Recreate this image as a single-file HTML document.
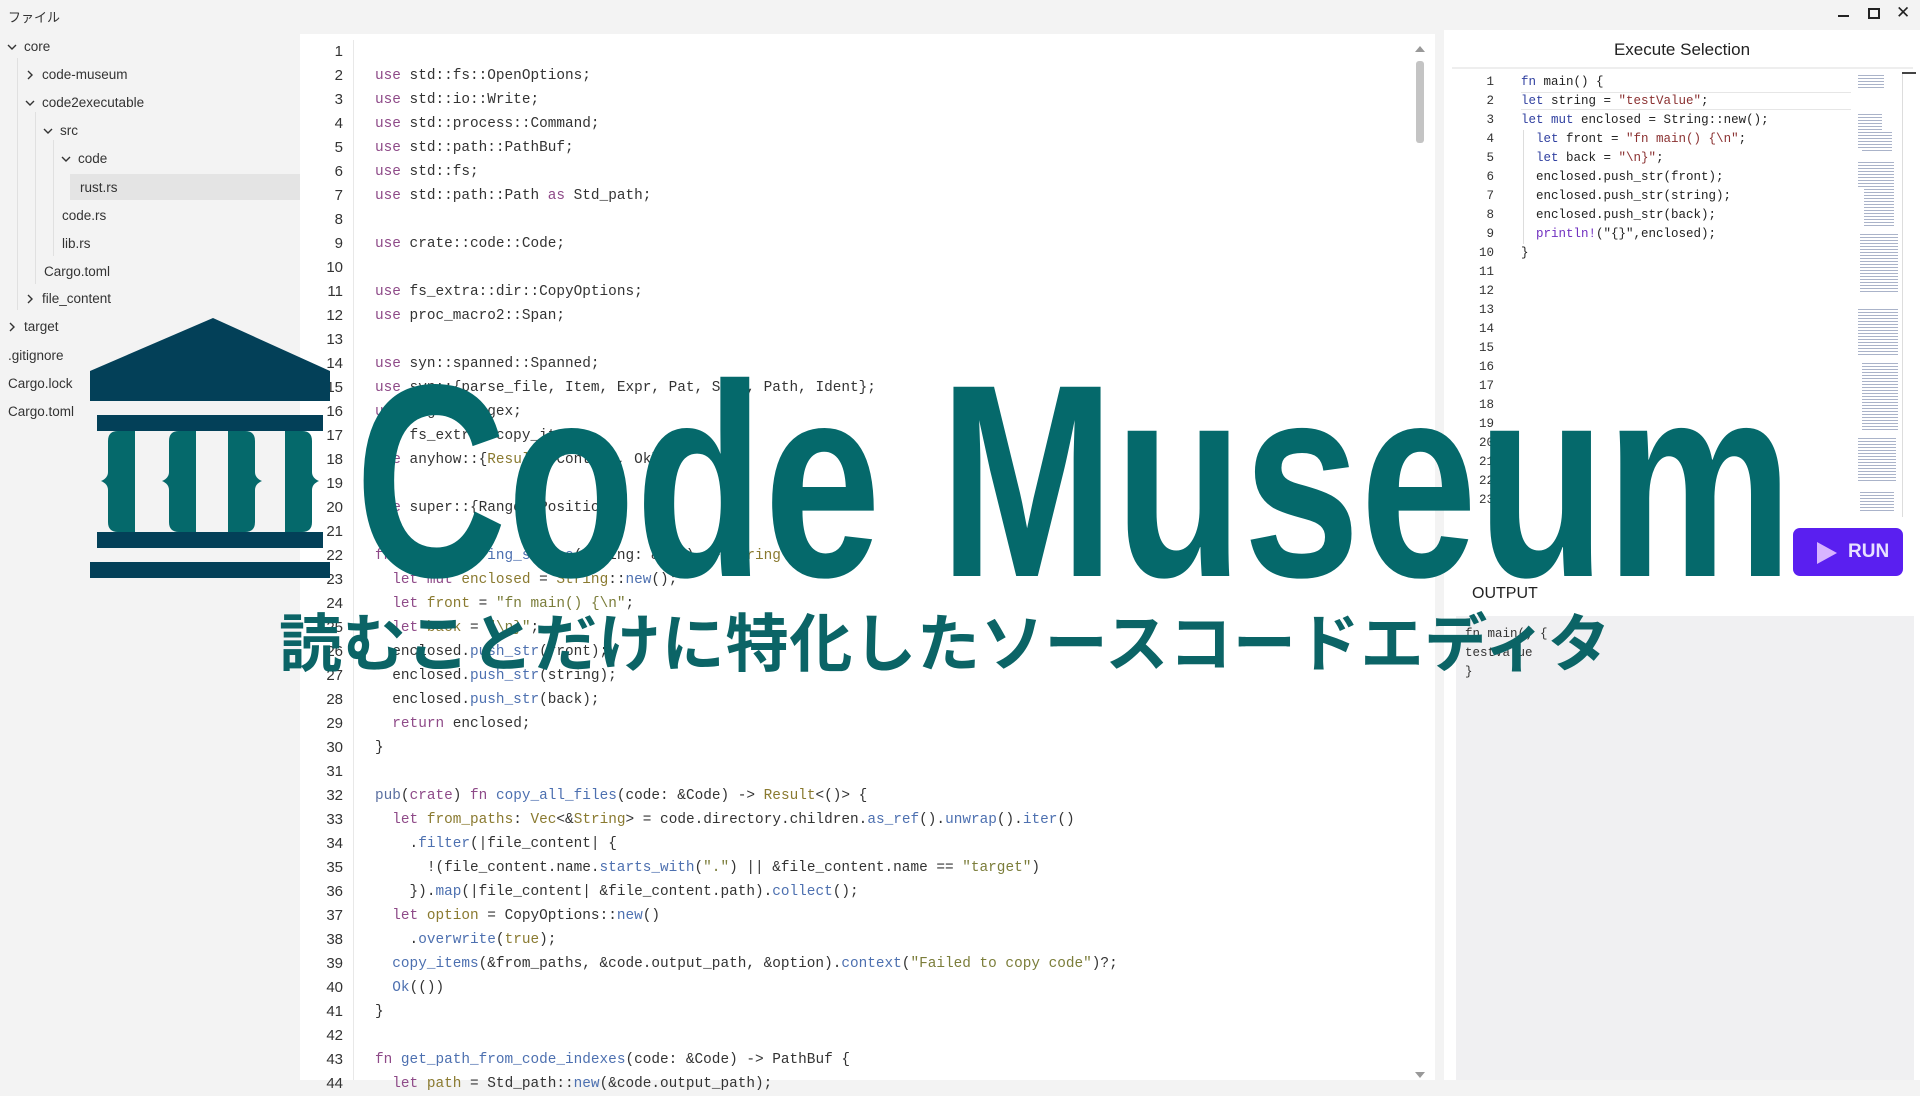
<!DOCTYPE html>
<html><head><meta charset="utf-8">
<style>
*{margin:0;padding:0;box-sizing:border-box}
body{width:1920px;height:1080px;overflow:hidden;background:#f3f3f3;position:relative;font-family:"Liberation Sans","Noto Sans CJK JP",sans-serif;color:#333}
.abs{position:absolute}
.tree div{position:absolute;font-size:13.5px;color:#333;white-space:nowrap;line-height:16px}
.tree svg{position:absolute;left:-17px;top:3px}
#ed{position:absolute;left:300px;top:34px;width:1135px;height:1046px;background:#fff}
.ln{position:absolute;left:300px;width:43px;text-align:right;font-family:"Liberation Sans",sans-serif;font-size:15px;color:#333;line-height:24px}
.code{position:absolute;left:375px;font-family:"Liberation Mono",monospace;font-size:14.4px;color:#333;line-height:24px;white-space:pre}
.k{color:#8e4a88}.b{color:#4d70b0}.o{color:#8a7a30}.s{color:#7b7d3a}.p{color:#5a6fa0}
#rp{position:absolute;left:1444px;top:30px;width:476px;height:1050px;background:#fff}
.rln{position:absolute;left:1460px;width:34px;text-align:right;font-family:"Liberation Mono",monospace;font-size:12.5px;color:#333;line-height:19px}
.rcode{position:absolute;left:1521px;font-family:"Liberation Mono",monospace;font-size:12.5px;color:#222;line-height:19px;white-space:pre}
.rcode .k{color:#3040a0}.rcode .s{color:#8a3030}.rcode .m{color:#7030c0}
</style></head><body>
<div class="abs" style="left:8px;top:7px;font-size:13px;color:#333">ファイル</div>
<div class="abs" style="left:1838px;top:15px;width:11px;height:2px;background:#222"></div>
<div class="abs" style="left:1868px;top:8px;width:12px;height:11px;border:2px solid #222"></div>
<div class="abs" style="left:1896px;top:3px;font-size:17px;color:#222">✕</div>

<div class="abs" style="left:70px;top:174px;width:230px;height:26px;background:#e4e4e4"></div>
<div class="abs" style="left:17px;top:58px;width:1px;height:252px;background:#e0e0e0"></div>
<div class="abs" style="left:35px;top:112px;width:1px;height:172px;background:#e0e0e0"></div>
<div class="abs" style="left:53px;top:140px;width:1px;height:116px;background:#e0e0e0"></div>
<div class="tree">
<div style="left:24px;top:39px"><svg width="10" height="10"><polyline points="1,3 5,7 9,3" fill="none" stroke="#333" stroke-width="1.4"/></svg>core</div>
<div style="left:42px;top:67px"><svg width="10" height="10"><polyline points="3,1 7,5 3,9" fill="none" stroke="#333" stroke-width="1.4"/></svg>code-museum</div>
<div style="left:42px;top:95px"><svg width="10" height="10"><polyline points="1,3 5,7 9,3" fill="none" stroke="#333" stroke-width="1.4"/></svg>code2executable</div>
<div style="left:60px;top:123px"><svg width="10" height="10"><polyline points="1,3 5,7 9,3" fill="none" stroke="#333" stroke-width="1.4"/></svg>src</div>
<div style="left:78px;top:151px"><svg width="10" height="10"><polyline points="1,3 5,7 9,3" fill="none" stroke="#333" stroke-width="1.4"/></svg>code</div>
<div style="left:80px;top:180px">rust.rs</div>
<div style="left:62px;top:208px">code.rs</div>
<div style="left:62px;top:236px">lib.rs</div>
<div style="left:44px;top:264px">Cargo.toml</div>
<div style="left:42px;top:291px"><svg width="10" height="10"><polyline points="3,1 7,5 3,9" fill="none" stroke="#333" stroke-width="1.4"/></svg>file_content</div>
<div style="left:24px;top:319px"><svg width="10" height="10"><polyline points="3,1 7,5 3,9" fill="none" stroke="#333" stroke-width="1.4"/></svg>target</div>
<div style="left:8px;top:348px">.gitignore</div>
<div style="left:8px;top:376px">Cargo.lock</div>
<div style="left:8px;top:404px">Cargo.toml</div>
</div>

<div id="ed"></div>
<div class="abs" style="left:353px;top:40px;width:1px;height:1040px;background:#e8e8e8"></div>
<div class="abs" style="left:1416px;top:61px;width:8px;height:82px;background:#c4c4c4;border-radius:3px"></div>
<div class="abs" style="left:1415px;top:46px;width:0;height:0;border-left:5px solid transparent;border-right:5px solid transparent;border-bottom:6px solid #999"></div>
<div class="abs" style="left:1415px;top:1072px;width:0;height:0;border-left:5px solid transparent;border-right:5px solid transparent;border-top:6px solid #999"></div>
<div class="ln" style="top:40px">1<br>2<br>3<br>4<br>5<br>6<br>7<br>8<br>9<br>10<br>11<br>12<br>13<br>14<br>15<br>16<br>17<br>18<br>19<br>20<br>21<br>22<br>23<br>24<br>25<br>26<br>27<br>28<br>29<br>30<br>31<br>32<br>33<br>34<br>35<br>36<br>37<br>38<br>39<br>40<br>41<br>42<br>43<br>44</div>
<div class="code" style="top:40px">
<span class="k">use</span> std::fs::OpenOptions;
<span class="k">use</span> std::io::Write;
<span class="k">use</span> std::process::Command;
<span class="k">use</span> std::path::PathBuf;
<span class="k">use</span> std::fs;
<span class="k">use</span> std::path::Path <span class="k">as</span> Std_path;

<span class="k">use</span> crate::code::Code;

<span class="k">use</span> fs_extra::dir::CopyOptions;
<span class="k">use</span> proc_macro2::Span;

<span class="k">use</span> syn::spanned::Spanned;
<span class="k">use</span> syn::{parse_file, Item, Expr, Pat, Stmt, Path, Ident};
<span class="k">use</span> regex::Regex;
<span class="k">use</span> fs_extra::copy_items;
<span class="k">use</span> anyhow::{<span class="o">Result</span>, Context, Ok};

<span class="k">use</span> super::{Range, Position};

<span class="k">fn</span> <span class="b">create_string_source</span>(string: &amp;str) -&gt; <span class="o">String</span> {
  <span class="k">let mut</span> <span class="o">enclosed</span> = <span class="o">String</span>::<span class="b">new</span>();
  <span class="k">let</span> <span class="o">front</span> = <span class="s">"fn main() {\n"</span>;
  <span class="k">let</span> <span class="o">back</span> = <span class="s">"\n}"</span>;
  enclosed.<span class="b">push_str</span>(front);
  enclosed.<span class="b">push_str</span>(string);
  enclosed.<span class="b">push_str</span>(back);
  <span class="k">return</span> enclosed;
}

<span class="p">pub</span>(<span class="k">crate</span>) <span class="k">fn</span> <span class="b">copy_all_files</span>(code: &amp;Code) -&gt; <span class="o">Result</span>&lt;()&gt; {
  <span class="k">let</span> <span class="o">from_paths</span>: <span class="o">Vec</span>&lt;&amp;<span class="o">String</span>&gt; = code.directory.children.<span class="b">as_ref</span>().<span class="b">unwrap</span>().<span class="b">iter</span>()
    .<span class="b">filter</span>(|file_content| {
      !(file_content.name.<span class="b">starts_with</span>(<span class="s">"."</span>) || &amp;file_content.name == <span class="s">"target"</span>)
    }).<span class="b">map</span>(|file_content| &amp;file_content.path).<span class="b">collect</span>();
  <span class="k">let</span> <span class="o">option</span> = CopyOptions::<span class="b">new</span>()
    .<span class="b">overwrite</span>(<span class="o">true</span>);
  <span class="b">copy_items</span>(&amp;from_paths, &amp;code.output_path, &amp;option).<span class="b">context</span>(<span class="s">"Failed to copy code"</span>)?;
  <span class="b">Ok</span>(())
}

<span class="k">fn</span> <span class="b">get_path_from_code_indexes</span>(code: &amp;Code) -&gt; PathBuf {
  <span class="k">let</span> <span class="o">path</span> = Std_path::<span class="b">new</span>(&amp;code.output_path);</div>

<div id="rp"></div>
<div class="abs" style="left:1444px;top:40px;width:476px;text-align:center;font-size:17px;color:#222">Execute Selection</div>
<div class="abs" style="left:1452px;top:67px;width:461px;height:2px;background:#eee"></div>
<div class="abs" style="left:1521px;top:92px;width:330px;height:18px;border-top:1px solid #e6e6e6;border-bottom:1px solid #e6e6e6"></div>
<div class="abs" style="left:1523px;top:130px;width:1px;height:114px;background:#ddd"></div>
<div class="rln" style="top:73px">1<br>2<br>3<br>4<br>5<br>6<br>7<br>8<br>9<br>10<br>11<br>12<br>13<br>14<br>15<br>16<br>17<br>18<br>19<br>20<br>21<br>22<br>23</div>
<div class="rcode" style="top:73px"><span class="k">fn</span> main() {
<span class="k">let</span> string = <span class="s">"testValue"</span>;
<span class="k">let</span> <span class="k">mut</span> enclosed = String::new();
  <span class="k">let</span> front = <span class="s">"fn main() {\n"</span>;
  <span class="k">let</span> back = <span class="s">"\n}"</span>;
  enclosed.push_str(front);
  enclosed.push_str(string);
  enclosed.push_str(back);
  <span class="m">println!</span>("{}",enclosed);
}</div>
<svg class="abs" style="left:1856px;top:72px" width="60" height="450">
<defs><pattern id="ml" width="44" height="3" patternUnits="userSpaceOnUse"><rect x="0" y="0" width="44" height="1" fill="#8e9ab8"/></pattern></defs>
<g fill="url(#ml)" opacity=".75">
<rect x="2" y="2" width="26" height="16"/>
<rect x="2" y="40" width="24" height="38"/><rect x="6" y="60" width="30" height="20"/>
<rect x="2" y="90" width="36" height="25"/><rect x="8" y="115" width="30" height="40"/>
<rect x="4" y="160" width="38" height="60"/><rect x="2" y="235" width="40" height="50"/>
<rect x="6" y="290" width="36" height="70"/><rect x="2" y="365" width="38" height="45"/>
<rect x="4" y="418" width="34" height="22"/>
</g>
<rect x="46" y="0" width="1" height="445" fill="#ddd"/><rect x="46" y="0" width="14" height="2" fill="#444"/>
</svg>
<div class="abs" style="left:1793px;top:528px;width:110px;height:48px;background:#5a1ff0;border-radius:7px"></div>
<svg class="abs" style="left:1815px;top:540px" width="24" height="26"><polygon points="2,2 22,13 2,24" fill="#d8b4ff"/></svg>
<div class="abs" style="left:1848px;top:541px;font-size:19px;font-weight:bold;color:#e8e0ff">RUN</div>
<div class="abs" style="left:1472px;top:585px;font-size:16px;color:#222">OUTPUT</div>
<div class="abs" style="left:1456px;top:616px;width:458px;height:464px;background:#f0f0f2"></div>
<div class="abs" style="left:1465px;top:625px;font-family:'Liberation Mono',monospace;font-size:12.5px;line-height:19px;color:#333;white-space:pre">fn main() {
testValue
}</div>

<svg class="abs" style="left:0;top:0" width="340" height="600">
<polygon points="213,318 330,371 330,401 90,401 90,371" fill="#034058"/>
<rect x="97" y="415" width="226" height="16" fill="#034058"/>
<rect x="97" y="532" width="226" height="16" fill="#034058"/>
<rect x="90" y="562" width="240" height="16" fill="#034058"/>
<g fill="#05696b">
<path d="M118,431 H135 V532 H118 Q108,532 108,522 V490 Q108,484 101,481 Q108,478 108,472 V441 Q108,431 118,431Z"/>
<path d="M179,431 H196 V532 H179 Q169,532 169,522 V490 Q169,484 162,481 Q169,478 169,472 V441 Q169,431 179,431Z"/>
<path d="M228,431 H245 Q255,431 255,441 V472 Q255,478 262,481 Q255,484 255,490 V522 Q255,532 245,532 H228Z"/>
<path d="M285,431 H302 Q312,431 312,441 V472 Q312,478 319,481 Q312,484 312,490 V522 Q312,532 302,532 H285Z"/>
</g>
</svg>

<div class="abs" style="left:355px;top:344px;font-size:275px;line-height:275px;font-weight:bold;color:#05696b;white-space:nowrap;transform:scaleX(0.765);transform-origin:0 0">Code Museum</div>
<div class="abs" style="left:279px;top:608px;font-size:63px;line-height:63px;font-weight:bold;color:#0b6466;white-space:nowrap;letter-spacing:0.8px;font-family:'Noto Sans CJK JP',sans-serif">読むことだけに特化したソースコードエディタ</div>
</body></html>
